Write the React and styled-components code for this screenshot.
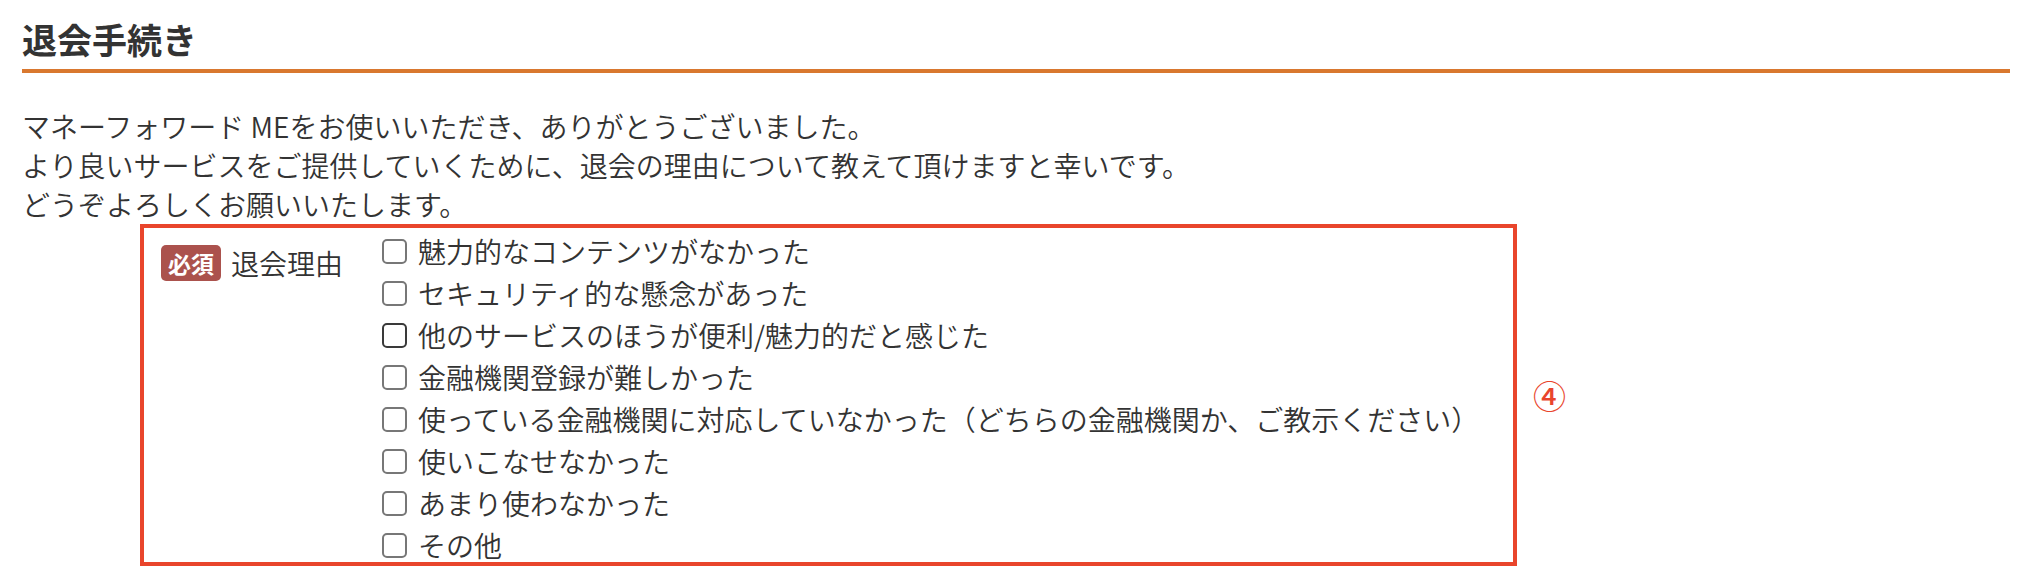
import React from "react";
import styled, { createGlobalStyle } from "styled-components";

const GlobalStyle = createGlobalStyle`
  html, body { margin: 0; padding: 0; background: #fff; }
  body {
    font-family: "Noto Sans CJK JP", "Noto Sans", sans-serif;
    color: #333;
  }
`;

const Page = styled.div`
  padding: 16px 15px 0 22px;
`;

const Heading = styled.h2`
  margin: 0;
  font-size: 35px;
  line-height: 46px;
  font-weight: 700;
  color: #333;
  padding-bottom: 7px;
  border-bottom: 4px solid #d9782f;
`;

const Intro = styled.p`
  margin: 34px 0 0;
  font-size: 28px;
  font-weight: 350;
  line-height: 39px;
  color: #333;
`;

const Frame = styled.div`
  position: relative;
  box-sizing: border-box;
  width: 1377px;
  margin-left: 118px;
  border: 4px solid #e9452c;
  display: flex;
  align-items: flex-start;
`;

const LabelCell = styled.div`
  box-sizing: border-box;
  width: 238px;
  flex: none;
  padding: 17px 0 0 17px;
  display: flex;
  align-items: center;
  gap: 10px;
`;

const Badge = styled.span`
  display: inline-flex;
  align-items: center;
  justify-content: center;
  width: 60px;
  height: 36px;
  border-radius: 5px;
  background: #ab524d;
  color: #fff;
  font-size: 23px;
  font-weight: 700;
`;

const LabelText = styled.span`
  font-size: 28px;
  font-weight: 350;
  line-height: 30px;
  color: #333;
`;

const Options = styled.ul`
  list-style: none;
  margin: 0 0 -4px;
  padding: 2px 0 0;
`;

const Option = styled.li`
  display: flex;
  align-items: center;
  height: 42px;
  gap: 11px;
  font-size: 28px;
  font-weight: 350;
  color: #333;
  white-space: nowrap;
`;

const Box = styled.span`
  box-sizing: border-box;
  width: 25px;
  height: 25px;
  flex: none;
  border: 2px solid ${(p) => (p.$focus ? "#3a3a3a" : "#777")};
  border-radius: 5px;
  background: #fff;
`;

const Marker = styled.span`
  position: absolute;
  left: calc(100% + 20px);
  top: 50%;
  transform: translateY(-50%);
  font-size: 33px;
  font-weight: 500;
  line-height: 1;
  color: #e9452c;
`;

const reasons = [
  "魅力的なコンテンツがなかった",
  "セキュリティ的な懸念があった",
  "他のサービスのほうが便利/魅力的だと感じた",
  "金融機関登録が難しかった",
  "使っている金融機関に対応していなかった（どちらの金融機関か、ご教示ください）",
  "使いこなせなかった",
  "あまり使わなかった",
  "その他",
];

export default function App() {
  return (
    <>
      <GlobalStyle />
      <Page>
        <Heading>退会手続き</Heading>
        <Intro>
          マネーフォワード MEをお使いいただき、ありがとうございました。
          <br />
          より良いサービスをご提供していくために、退会の理由について教えて頂けますと幸いです。
          <br />
          どうぞよろしくお願いいたします。
        </Intro>
        <Frame>
          <LabelCell>
            <Badge>必須</Badge>
            <LabelText>退会理由</LabelText>
          </LabelCell>
          <Options>
            {reasons.map((r, i) => (
              <Option key={r}>
                <Box $focus={i === 2} />
                {r}
              </Option>
            ))}
          </Options>
          <Marker>④</Marker>
        </Frame>
      </Page>
    </>
  );
}
